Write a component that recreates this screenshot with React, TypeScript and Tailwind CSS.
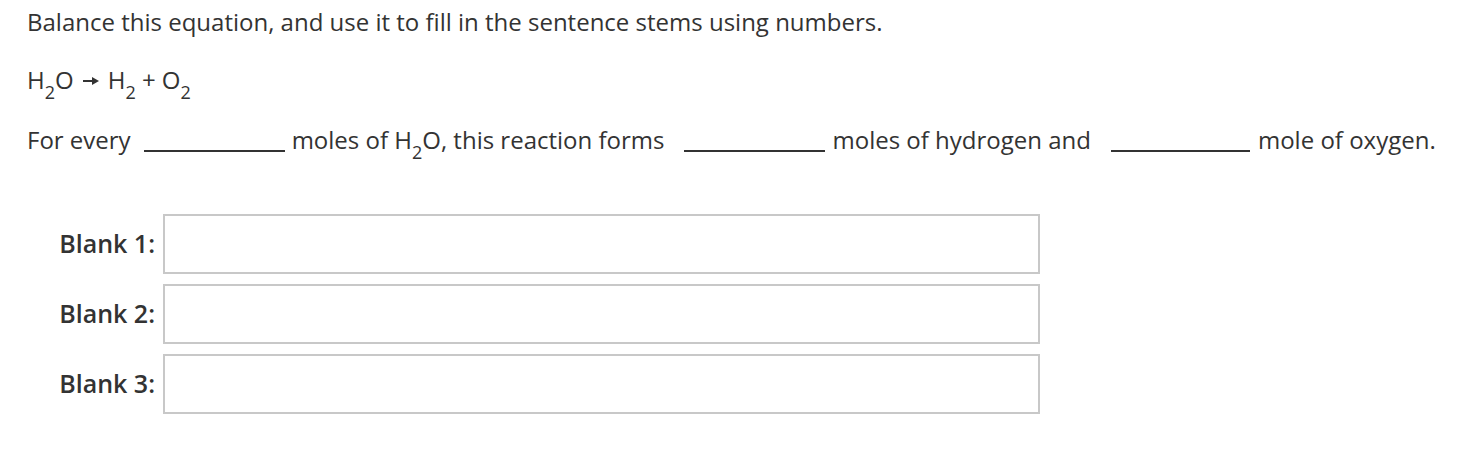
export default function App() {
  const blanks = ['Blank 1:', 'Blank 2:', 'Blank 3:']
  const sub = 'text-[18px] align-[-5px] leading-none'

  return (
    <div className="bg-white min-h-[458px] text-[#333] text-[24px] pl-[27px] pt-[6px]" style={{ fontFamily: '"Open Sans", sans-serif' }}>
      <p className="leading-[32px]">Balance this equation, and use it to fill in the sentence stems using numbers.</p>
      <p className="leading-[32px] mt-[26px]">
        H<sub className={sub}>2</sub>O
        <svg width="16" height="10" viewBox="0 0 16 10" className="inline-block mx-[9px] align-[3px]">
          <path d="M0 5H11" stroke="#333" strokeWidth="2" />
          <path d="M9 1L16 5L9 9Z" fill="#333" />
        </svg>
        H<sub className={sub}>2</sub> + O<sub className={sub}>2</sub>
      </p>
      <p className="leading-[32px] mt-[28px] flex items-end whitespace-nowrap">
        <span>For every</span>
        <span className="inline-block w-[141px] border-b-2 border-[#333] ml-[13px] mr-[7px] mb-[4px]" />
        <span>
          moles of H<sub className={sub}>2</sub>O, this reaction forms
        </span>
        <span className="inline-block w-[141px] border-b-2 border-[#333] ml-[20px] mr-[7px] mb-[4px]" />
        <span>moles of hydrogen and</span>
        <span className="inline-block w-[139px] border-b-2 border-[#333] ml-[20px] mr-[8px] mb-[4px]" />
        <span>mole of oxygen.</span>
      </p>
      <div className="mt-[58px] flex flex-col gap-[10px]">
        {blanks.map((b) => (
          <div key={b} className="flex items-center">
            <label className="w-[136px] pr-[8px] text-right font-semibold text-[25px]">{b}</label>
            <div className="w-[877px] h-[60px] border-2 border-[#c8c8c8] bg-white" />
          </div>
        ))}
      </div>
    </div>
  )
}
